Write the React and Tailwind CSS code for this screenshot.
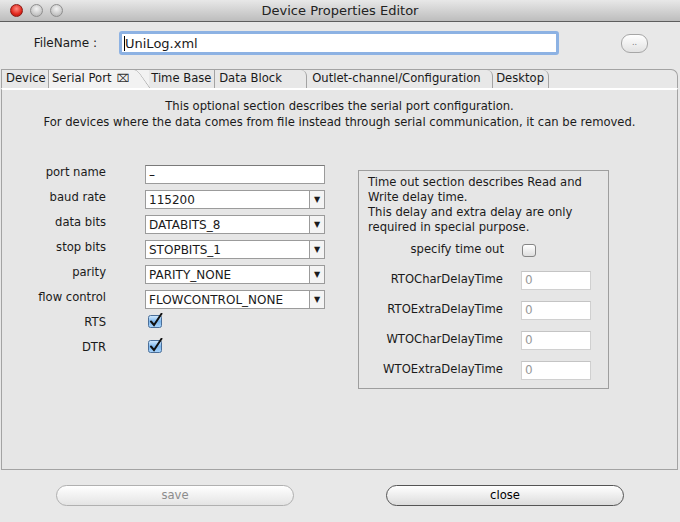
const font = "font-['DejaVu_Sans',sans-serif]";

const TrafficLight = ({ red }) => (
  <span
    className={
      red
        ? "w-[13px] h-[13px] rounded-full border border-[#8a1a14] bg-[radial-gradient(circle_at_50%_35%,#ff8a80,#e0261c_60%,#a5150e)]"
        : "w-[13px] h-[13px] rounded-full border border-[#8e8e8e] bg-[radial-gradient(circle_at_50%_35%,#f4f4f4,#c9c9c9_60%,#a9a9a9)]"
    }
  />
);

const CheckedBox = () => (
  <svg width="15" height="15" viewBox="0 0 15 15">
    <defs>
      <linearGradient id="cb" x1="0" y1="0" x2="0" y2="1">
        <stop offset="0" stopColor="#d6ecff" />
        <stop offset="0.5" stopColor="#7fb8ee" />
        <stop offset="1" stopColor="#a9d4fb" />
      </linearGradient>
    </defs>
    <rect x="0.5" y="2.5" width="13" height="12" rx="2" fill="url(#cb)" stroke="#4b6f99" />
    <path d="M3 8.5 L6 12 L13.5 0.8" fill="none" stroke="#111" strokeWidth="2" strokeLinecap="round" />
  </svg>
);

const TextField = ({ value, className = "", muted }) => (
  <div
    className={`h-[19px] bg-white border border-[#9b9b9b] border-t-[#7a7a7a] flex items-center px-[3px] text-[12px] ${muted ? "text-[#9a9a9a]" : "text-black"} ${className}`}
  >
    {value}
  </div>
);

const Select = ({ value }) => (
  <div className="h-[19px] w-[180px] bg-white border border-[#9b9b9b] flex items-center text-[12px]">
    <span className="flex-1 px-[3px]">{value}</span>
    <span className="w-[15px] h-full border-l border-[#9b9b9b] flex items-center justify-center text-[8px] bg-[#f4f4f4]">
      ▼
    </span>
  </div>
);

const rows = [
  { label: "port name", kind: "text", value: "–" },
  { label: "baud rate", kind: "select", value: "115200" },
  { label: "data bits", kind: "select", value: "DATABITS_8" },
  { label: "stop bits", kind: "select", value: "STOPBITS_1" },
  { label: "parity", kind: "select", value: "PARITY_NONE" },
  { label: "flow control", kind: "select", value: "FLOWCONTROL_NONE" },
  { label: "RTS", kind: "check" },
  { label: "DTR", kind: "check" },
];

const delays = ["RTOCharDelayTime", "RTOExtraDelayTime", "WTOCharDelayTime", "WTOExtraDelayTime"];

export default function App() {
  return (
    <div className={`w-[680px] h-[522px] bg-[#e8e8e8] flex flex-col text-[11.6px] text-[#1a1a1a] ${font}`}>
      {/* title bar */}
      <div className="h-[22px] relative flex items-center bg-gradient-to-b from-[#e8e8e8] to-[#bdbdbd] border-b border-[#5e5e5e]">
        <div className="flex gap-[7px] pl-[10px]">
          <TrafficLight red />
          <TrafficLight />
          <TrafficLight />
        </div>
        <div className="absolute inset-0 flex items-center justify-center text-[13px] text-[#222]">
          Device Properties Editor
        </div>
      </div>

      {/* file name */}
      <div className="h-[47px] flex items-start pt-[9px]">
        <span className="w-[98px] h-[24px] flex items-center justify-end pr-[1px] text-[12px]">FileName :</span>
        <div className="ml-[21px] w-[440px] h-[24px] rounded-[3px] border-[3px] border-[#8db2e3] bg-white flex items-center px-[2px] text-[13px]">
          <span className="border-l border-black leading-[15px]">UniLog.xml</span>
        </div>
        <div className="ml-[62px] mt-[3px] w-[27px] h-[19px] rounded-[9px] border border-[#a6a6a6] bg-gradient-to-b from-white to-[#e2e2e2] flex items-center justify-center text-[8px] text-[#777] leading-none pb-[2px]">
          ..
        </div>
      </div>

      {/* tabs */}
      <div className="ml-[1px] mr-[2px] h-[19px] flex border-t border-l border-r border-[#a3a3a3] rounded-tr-[7px]">
        <div className="h-full w-[47px] flex items-center pl-[4px] border-r border-[#a3a3a3]">Device</div>
        <div className="h-full flex items-center pl-[3px] bg-[#f2f2f2]">
          Serial Port
          <span className="ml-[5px] text-[11px] text-[#333]">⌧</span>
          <svg width="20" height="19" viewBox="0 0 20 19" className="-mr-[2px] ml-[2px]">
            <path d="M0 0 L3 0 Q6 0 8 3 L19 18.5" fill="#f2f2f2" stroke="#a3a3a3" />
            <path d="M0 0 L3 0 Q6 0 8 3 L19 19 L0 19 Z" fill="#f2f2f2" />
          </svg>
        </div>
        <div className="h-full w-[66px] flex items-center pl-[2px] border-r border-[#a3a3a3]">Time Base</div>
        <div className="h-full flex items-center pl-[4px] w-[92px] border-r border-[#a3a3a3] rounded-tr-[6px]">Data Block</div>
        <div className="h-full flex items-center pl-[5px] w-[186px] border-r border-[#a3a3a3] rounded-tr-[6px]">Outlet-channel/Configuration</div>
        <div className="h-full flex items-center pl-[3px] w-[56px] border-r border-[#a3a3a3] rounded-tr-[6px]">Desktop</div>
      </div>

      {/* panel */}
      <div className="ml-[1px] mr-[2px] h-[382px] border-l border-r border-b border-[#a3a3a3] border-t-2 border-t-white bg-[#e6e6e6] flex flex-col">
        <div className="pt-[8px] text-center leading-[16px]">
          <p>This optional section describes the serial port configuration.</p>
          <p>For devices where the data comes from file instead through serial communication, it can be removed.</p>
        </div>

        <div className="mt-[36px] flex">
          <div className="flex flex-col -mt-[3px]">
            {rows.map((r) => (
              <div key={r.label} className="h-[25px] flex">
                <span className="w-[104px] text-right pt-[1px]">{r.label}</span>
                <div className="ml-[39px] pt-[2px]">
                  {r.kind === "text" && <TextField value={r.value} className="w-[180px]" />}
                  {r.kind === "select" && <Select value={r.value} />}
                  {r.kind === "check" && (
                    <div className="pl-[3px] -mt-[2px]">
                      <CheckedBox />
                    </div>
                  )}
                </div>
              </div>
            ))}
          </div>

          <div className="ml-[33px] mt-[4px] w-[251px] h-[219px] border border-[#9e9e9e] flex flex-col">
            <div className="pl-[9px] pt-[4px] leading-[15px]">
              <p>Time out section describes Read and</p>
              <p>Write delay time.</p>
              <p>This delay and extra delay are only</p>
              <p>required in special purpose.</p>
            </div>
            <div className="flex items-center mt-[7px] h-[16px]">
              <span className="w-[145px] text-right">specify time out</span>
              <span className="ml-[18px] w-[14px] h-[13px] rounded-[3px] border border-[#858585] bg-gradient-to-b from-white to-[#dedede]" />
            </div>
            <div className="flex flex-col mt-[13px] gap-[12px]">
              {delays.map((d) => (
                <div key={d} className="flex items-center h-[18px]">
                  <span className="w-[144px] text-right">{d}</span>
                  <TextField value="0" muted className="ml-[18px] w-[70px] h-[18px] border-[#d0d0d0] border-t-[#c4c4c4]" />
                </div>
              ))}
            </div>
          </div>
        </div>
      </div>

      {/* buttons */}
      <div className="flex mt-[15px]">
        <div className="ml-[56px] w-[238px] h-[21px] rounded-full border border-[#b0b0b0] bg-gradient-to-b from-white to-[#e4e4e4] flex items-center justify-center text-[#8c8c8c]">
          save
        </div>
        <div className="ml-[92px] w-[238px] h-[21px] rounded-full border border-[#555] bg-gradient-to-b from-white to-[#dcdcdc] flex items-center justify-center text-black">
          close
        </div>
      </div>
    </div>
  );
}
